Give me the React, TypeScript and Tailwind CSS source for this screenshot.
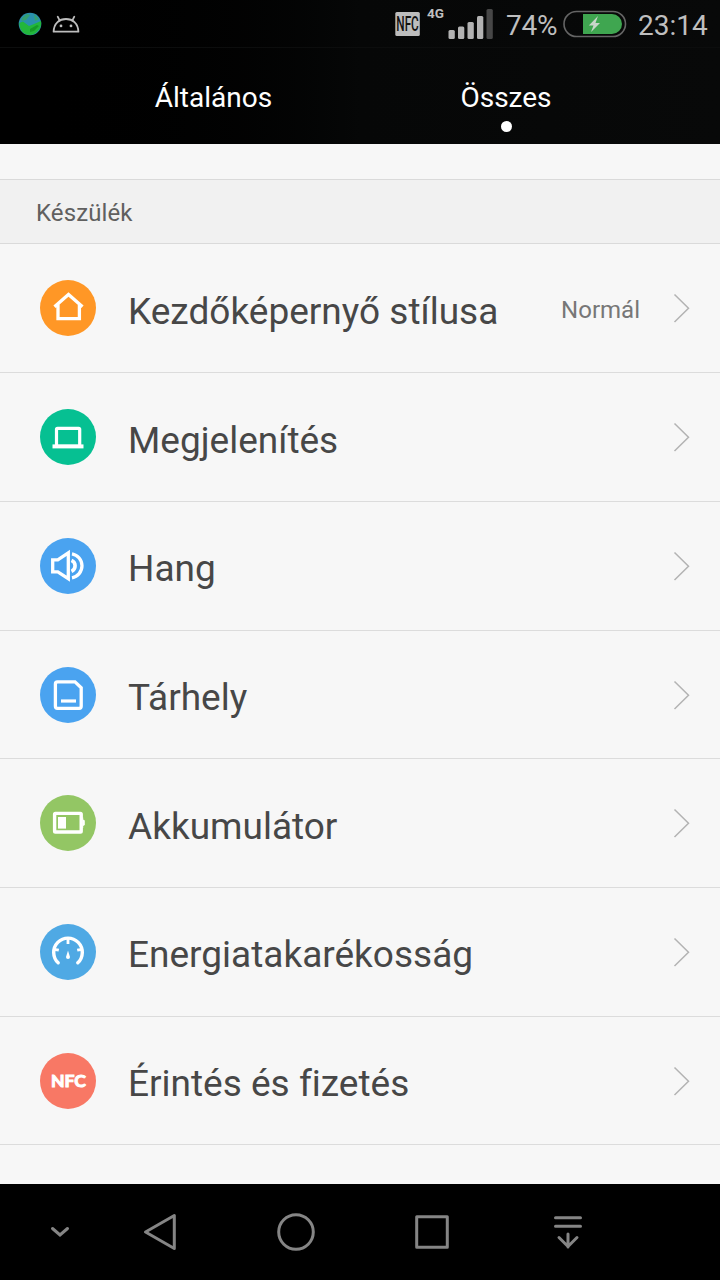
import type { ReactNode } from 'react';

function Disc({ color, children }: { color: string; children: ReactNode }) {
  return (
    <svg className="size-14 shrink-0" viewBox="0 0 56 56" fill="none" stroke="#fff">
      <circle cx="28" cy="28" r="28" fill={color} stroke="none" />
      {children}
    </svg>
  );
}

const rows: { title: string; value?: string; icon: ReactNode }[] = [
  {
    title: 'Kezdőképernyő stílusa',
    value: 'Normál',
    icon: (
      <Disc color="#ff9726">
        <path d="M14.5 26.7 28.5 14.4 42.5 26.700M18 24.500V38.700H39.400V24.500" strokeWidth="3.300" />
      </Disc>
    ),
  },
  {
    title: 'Megjelenítés',
    icon: (
      <Disc color="#06c092">
        <rect x="16.5" y="19.3" width="23.2" height="18" rx="1" strokeWidth="3.2" />
        <path d="M12.5 37.4H43.5" strokeWidth="4" />
      </Disc>
    ),
  },
  {
    title: 'Hang',
    icon: (
      <Disc color="#4aa3f0">
        <path d="M12.7 21.8H17.8L28.3 14.8V40.6L17.8 33.8H12.7Z" strokeWidth="3.3" />
        <path d="M32 15.8A12.2 12.2 0 0 1 32 39.8" strokeWidth="3.3" />
        <path d="M31.5 22.3A6 6 0 0 1 31.5 33.3" strokeWidth="3.6" />
      </Disc>
    ),
  },
  {
    title: 'Tárhely',
    icon: (
      <Disc color="#4aa3f0">
        <path d="M17.4 14.9H35L41.2 20.7V39.3Q41.2 41.3 39.2 41.3H17.4Q15.4 41.3 15.4 39.3V16.9Q15.4 14.9 17.4 14.9Z" strokeWidth="3.3" />
        <path d="M21 34H36" strokeWidth="3.2" />
      </Disc>
    ),
  },
  {
    title: 'Akkumulátor',
    icon: (
      <Disc color="#93c664">
        <rect x="14.6" y="18.4" width="26.6" height="18.6" rx="0.8" strokeWidth="3.4" />
        <rect x="18" y="22" width="8" height="11.6" fill="#fff" stroke="none" />
        <path d="M42.5 22.5H43.2V24.5L44.8 25.5V30L43.2 31V33H42.5Z" fill="#fff" stroke="none" />
      </Disc>
    ),
  },
  {
    title: 'Energiatakarékosság',
    icon: (
      <Disc color="#4fa9e4">
        <path d="M18.2 38.8A14.3 14.3 0 1 1 37.8 38.8" strokeWidth="3.4" strokeLinecap="round" />
        <path d="M28 14V20M14 25.3 18.8 26.2M42 25.3 37.2 26.2" strokeWidth="2.8" />
        <path d="M28 26.5 30 33A2 2 0 0 1 26 33Z" fill="#fff" stroke="none" />
      </Disc>
    ),
  },
  {
    title: 'Érintés és fizetés',
    icon: (
      <Disc color="#f87865">
        <text
          x="11"
          y="34.3"
          fontSize="17"
          fontWeight="700"
          fontFamily="Lato, sans-serif"
          textLength="35"
          lengthAdjust="spacingAndGlyphs"
          fill="#fff"
          stroke="#fff"
          strokeWidth="1"
        >
          NFC
        </text>
      </Disc>
    ),
  },
];

function StatusBar() {
  return (
    <div className="flex h-12 shrink-0 items-center border-b border-[#0c0d0d] text-[28px] text-[#bfbfbf]">
      <svg className="ml-[18px] size-6 shrink-0" viewBox="0 0 24 24">
        <circle cx="12" cy="12" r="11.3" fill="#2a90ac" />
        <path d="M1.2 11 5 9.500l6 4.500 5-2 7-3q.8 6-2.700 9.500-4 4.500-8.500 4.500Q7 22.800 4 19.500 1.500 16 1.200 11Z" fill="#22b63c" />
        <path d="M4 6 9 2l3 1-4 5-4.500 1ZM16 2l5 5-4 2Z" fill="#35a070" />
        <path d="m12 17 7-4 2 1-5 5-4 1Z" fill="#159a26" />
      </svg>
      <svg className="ml-[10px] h-[18px] w-7 shrink-0" viewBox="0 0 28 18" fill="none" stroke="#bdbdbd" strokeWidth="1.8">
        <path d="M1.6 16.7C2 8 7.500 4 14 4S26 8 26.400 16.700Z" strokeLinejoin="round" />
        <path d="M7.500 5.200 5.700 1.700M20.500 5.200 22.300 1.700" strokeLinecap="round" />
        <circle cx="9" cy="10.900" r="1.400" fill="#bdbdbd" stroke="none" />
        <circle cx="19" cy="10.900" r="1.400" fill="#bdbdbd" stroke="none" />
      </svg>
      <svg className="ml-auto h-6 w-[25px] shrink-0" viewBox="0 0 25 24">
        <rect x="0.3" width="24.5" height="24" rx="1.5" fill="#bdbdbd" />
        <text x="1.3" y="18.8" fontSize="19.5" fontWeight="500" fontFamily="Roboto, sans-serif" textLength="22.5" lengthAdjust="spacingAndGlyphs" fill="#111">
          NFC
        </text>
      </svg>
      <span className="mb-[22px] ml-[7px] w-[18px] text-[13.5px] leading-[16px] font-bold">4G</span>
      <svg className="ml-[3px] h-[31px] w-[45px] shrink-0" viewBox="0 0 45 31" fill="#b3b3b3">
        <rect x="0.5" y="22" width="6.3" height="9" rx="1.5" />
        <rect x="10" y="18.5" width="6.3" height="12.5" rx="1.5" />
        <rect x="19.5" y="14" width="6.3" height="17" rx="1.5" />
        <rect x="29" y="8" width="6.3" height="23" rx="1.5" />
        <rect x="38.5" y="1" width="6.3" height="30" rx="1.5" fill="#474747" />
      </svg>
      <span className="mt-[5px] ml-[13px] w-[52px] tracking-[-0.2px] whitespace-nowrap">74%</span>
      <svg className="ml-[5px] h-[28px] w-[64px] shrink-0" viewBox="0 0 64 28">
        <rect x="1" y="1.5" width="61.5" height="25" rx="12.5" fill="none" stroke="#656565" strokeWidth="1.6" />
        <path d="M20 4H49A10 10 0 0 1 49 24H20Z" fill="#3fa650" />
        <path d="M35 6 25.8 15.5H30.5L28 22 37 13H32.5Z" fill="#c8d6ca" />
      </svg>
      <span className="mt-[5px] mr-[12px] ml-[11px] w-[70px] whitespace-nowrap">23:14</span>
    </div>
  );
}

export default function App() {
  return (
    <div className="flex h-[1280px] w-[720px] flex-col overflow-hidden bg-[#f7f7f7] font-['Roboto',sans-serif]">
      <header className="flex h-36 shrink-0 flex-col bg-gradient-to-r from-black via-[#060707] to-[#080909]">
        <StatusBar />
        <nav className="flex flex-1 pr-[1px] pl-[67px] text-[28px] leading-[30px] text-white">
          <div className="flex w-[293px] flex-col items-center pt-[35px]">Általános</div>
          <div className="flex w-[292px] flex-col items-center pt-[35px]">
            Összes
            <span className="mt-[8px] size-[11px] rounded-full bg-white" />
          </div>
        </nav>
      </header>
      <main className="flex flex-1 flex-col">
        <h2 className="mt-[35px] mb-[0.6px] flex h-[65px] shrink-0 items-center border-y border-[#dadada] bg-[#f1f1f1] pt-[3px] pl-9 text-[24px] tracking-[0.1px] text-[#606060]">
          Készülék
        </h2>
        {rows.map((row) => (
          <div key={row.title} className="flex h-[128.7px] shrink-0 items-center border-b border-[#dcdcdc] pr-[29px] pl-10">
            {row.icon}
            <span className="mt-[6.4px] ml-8 text-[37px] whitespace-nowrap text-[#474747] [font-variant-ligatures:none]">{row.title}</span>
            {row.value && <span className="mt-[3.6px] ml-auto text-[24px] text-[#777]">{row.value}</span>}
            <svg
              className={`h-[30px] w-[18px] shrink-0 ${row.value ? 'ml-[33px]' : 'ml-auto'}`}
              viewBox="0 0 18 30"
              fill="none"
              stroke="#b3b3b3"
              strokeWidth="1.5"
            >
              <path d="M1.5 1.5 15.5 15.3 1.5 29" />
            </svg>
          </div>
        ))}
      </main>
      <footer className="flex h-24 shrink-0 items-center bg-black">
        <svg className="ml-[50px] h-3 w-5" viewBox="0 0 20 12" fill="none" stroke="#858585" strokeWidth="3" strokeLinecap="round">
          <path d="M2.5 2.5 10 9 17.5 2.5" />
        </svg>
        <svg className="ml-[72px] h-[38px] w-9" viewBox="0 0 36 38" fill="none" stroke="#858585" strokeWidth="3" strokeLinejoin="round">
          <path d="M3.5 19 32.3 2.5V35.5Z" />
        </svg>
        <svg className="ml-[98px] size-10" viewBox="0 0 40 40" fill="none" stroke="#858585" strokeWidth="3">
          <circle cx="20" cy="20" r="17.3" />
        </svg>
        <svg className="ml-[98px] size-9" viewBox="0 0 36 36" fill="none" stroke="#858585" strokeWidth="3" strokeLinejoin="round">
          <rect x="2.7" y="2.7" width="30.6" height="30.6" />
        </svg>
        <svg className="ml-[102px] h-9 w-8" viewBox="0 0 32 36" fill="none" stroke="#858585" strokeWidth="3" strokeLinecap="round" strokeLinejoin="round">
          <path d="M3.5 3.7H28.5M3.5 12.3H28.5M16 20V33M7 23.5 16 32.5 25 23.5" />
        </svg>
      </footer>
    </div>
  );
}
